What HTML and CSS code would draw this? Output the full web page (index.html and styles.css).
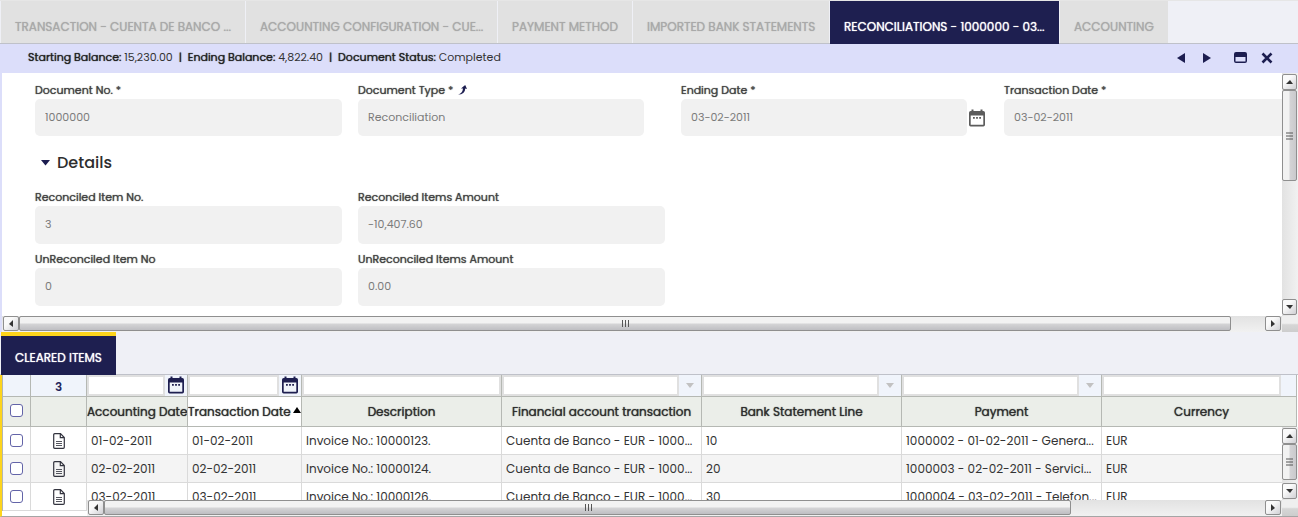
FILE: index.html
```html
<!DOCTYPE html>
<html lang="en">
<head>
<meta charset="utf-8">
<title>Reconciliations</title>
<link rel="stylesheet" href="styles.css">
</head>
<body>
<svg class="defs" aria-hidden="true">
  <symbol id="cal" viewBox="0 0 16 18"><path fill-rule="evenodd" d="M2.500 0.500h2v1.500h7V.5h2v1.500h.8q1.700 0 1.700 1.700v12q0 1.800-1.700 1.800H1.700Q0 17.500 0 15.700v-12Q0 2 1.700 2h.8zM1.700 6.500v9.300h12.600V6.500zM4 8h1.800v1.800H4zM7.100 8h1.800v1.800H7.100zM10.200 8h1.800v1.800h-1.800z"/></symbol>
  <symbol id="doc" viewBox="0 0 12 16"><path d="M.7 1.700q0-1 1-1H7.500l3.800 3.800v9.800q0 1-1 1H1.700q-1 0-1-1zM7.300 1v3.700h4" fill="none" stroke="#33343f" stroke-width="1.200"/><path d="M3 8.500h6M3 10.500h6M3 12.500h6" stroke="#55565f" stroke-width="1.200"/></symbol>
</svg>

<nav class="tabs">
  <button class="tab w-a">TRANSACTION - CUENTA DE BANCO ...</button>
  <button class="tab w-b">ACCOUNTING CONFIGURATION - CUE...</button>
  <button class="tab w-c">PAYMENT METHOD</button>
  <button class="tab w-d">IMPORTED BANK STATEMENTS</button>
  <button class="tab w-e active">RECONCILIATIONS - 1000000 - 03...</button>
  <button class="tab w-f">ACCOUNTING</button>
</nav>

<header class="status">
  <p class="facts"><b>Starting Balance:</b> 15,230.00 <b class="bar">|</b> <b>Ending Balance:</b> 4,822.40 <b class="bar">|</b> <b>Document Status:</b> Completed</p>
  <div class="tools">
    <button aria-label="Previous"><svg width="10" height="12"><path d="M9 1v10L1 6z"/></svg></button>
    <button aria-label="Next" class="near"><svg width="10" height="12"><path d="M1 1v10l8-5z"/></svg></button>
    <button aria-label="Restore" class="apart"><svg width="14" height="12"><path fill-rule="evenodd" d="M2 0h9q2 0 2 2v7q0 2-2 2H2q-2 0-2-2V2Q0 0 2 0zM1.500 5v4.500h10V5z"/></svg></button>
    <button aria-label="Close"><svg width="12" height="12"><path d="M1.500 1.500l9 9M10.500 1.500l-9 9" stroke="#1c1d50" stroke-width="2.600"/></svg></button>
  </div>
</header>

<main class="pane">
  <form class="form">
    <div class="fields">
      <div class="field"><label for="docno">Document No. *</label><input id="docno" value="1000000" readonly></div>
      <div class="field"><label for="doctype">Document Type * <svg class="link" width="10" height="10"><path d="M0 9.500Q4.500 8.500 5 3.500L3 3.500 7.200 0 9 4 7.300 3.500Q7 9.500 0 9.500z"/></svg></label><input id="doctype" class="short" value="Reconciliation" readonly></div>
      <div class="field"><label for="ending">Ending Date *</label><div class="dated"><input id="ending" class="short" value="03-02-2011" readonly><svg class="cal" width="16" height="18"><use href="#cal"/></svg></div></div>
      <div class="field"><label for="trx">Transaction Date *</label><input id="trx" value="03-02-2011" readonly></div>
    </div>
    <h2 class="section"><svg width="9" height="6"><path d="M0 0h9L4.500 5.500z"/></svg>Details</h2>
    <div class="fields tall">
      <div class="field"><label for="rno">Reconciled Item No.</label><input id="rno" value="3" readonly></div>
      <div class="field"><label for="ramt">Reconciled Items Amount</label><input id="ramt" value="-10,407.60" readonly></div>
      <div class="field"><label for="uno">UnReconciled Item No</label><input id="uno" value="0" readonly></div>
      <div class="field"><label for="uamt">UnReconciled Items Amount</label><input id="uamt" value="0.00" readonly></div>
    </div>
  </form>
  <div class="sb v form-v">
    <i class="btn"><svg width="7" height="4"><path d="M0 4h7L4 0z"/></svg></i><i class="thumb"><svg width="7" height="8"><path d="M0 1h7M0 4h7M0 7h7" stroke="#555"/></svg></i>
    <i class="btn end"><svg width="7" height="4"><path d="M0 0h7L4 4z"/></svg></i>
  </div>
  <div class="sb h form-h">
    <i class="btn"><svg width="4" height="7"><path d="M4 0v7L0 4z"/></svg></i><i class="thumb"><svg width="8" height="7"><path d="M1.500 0v7M4.500 0v7M7.500 0v7" stroke="#555"/></svg></i>
    <i class="btn end"><svg width="4" height="7"><path d="M0 0v7l4-3z"/></svg></i>
  </div>
  <div class="corner"></div>
</main>

<nav class="subtabs"><button class="subtab">CLEARED ITEMS</button></nav>

<section class="grid">
  <table>
    <colgroup><col class="c-check"><col class="c-num"><col class="c-acc"><col class="c-trx"><col class="c-text"><col class="c-text"><col class="c-text"><col class="c-text"><col></colgroup>
    <thead>
      <tr class="filters">
        <td></td><td class="count">3</td>
        <td><div class="filter"><input aria-label="Filter accounting date"><span class="pick date"><svg class="cal" width="16" height="18"><use href="#cal"/></svg></span></div></td>
        <td><div class="filter"><input aria-label="Filter transaction date"><span class="pick date"><svg class="cal" width="16" height="18"><use href="#cal"/></svg></span></div></td>
        <td><div class="filter"><input aria-label="Filter description"></div></td>
        <td><div class="filter"><input aria-label="Filter financial account transaction"><span class="pick"><svg width="8" height="5"><path d="M0 0h8L4 5z"/></svg></span></div></td>
        <td><div class="filter"><input aria-label="Filter bank statement line"><span class="pick"><svg width="8" height="5"><path d="M0 0h8L4 5z"/></svg></span></div></td>
        <td><div class="filter"><input aria-label="Filter payment"><span class="pick"><svg width="8" height="5"><path d="M0 0h8L4 5z"/></svg></span></div></td>
        <td><div class="filter last"><input aria-label="Filter currency"></div></td>
      </tr>
      <tr class="heads">
        <th class="all"><input type="checkbox" aria-label="Select all"></th><th></th>
        <th>Accounting Date</th>
        <th class="sorted">Transaction Date<svg class="sort" width="8" height="6"><path d="M0 6h8L4 0z"/></svg></th>
        <th>Description</th><th>Financial account transaction</th><th>Bank Statement Line</th><th>Payment</th><th class="wide">Currency</th>
      </tr>
    </thead>
    <tbody>
      <tr><td class="mid"><input type="checkbox" aria-label="Select row 1"></td><td class="mid"><svg width="12" height="16"><use href="#doc"/></svg></td><td>01-02-2011</td><td>01-02-2011</td><td>Invoice No.: 10000123.</td><td>Cuenta de Banco - EUR - 1000...</td><td>10</td><td>1000002 - 01-02-2011 - Genera...</td><td>EUR</td></tr>
      <tr><td class="mid"><input type="checkbox" aria-label="Select row 2"></td><td class="mid"><svg width="12" height="16"><use href="#doc"/></svg></td><td>02-02-2011</td><td>02-02-2011</td><td>Invoice No.: 10000124.</td><td>Cuenta de Banco - EUR - 1000...</td><td>20</td><td>1000003 - 02-02-2011 - Servici...</td><td>EUR</td></tr>
      <tr><td class="mid"><input type="checkbox" aria-label="Select row 3"></td><td class="mid"><svg width="12" height="16"><use href="#doc"/></svg></td><td>03-02-2011</td><td>03-02-2011</td><td>Invoice No.: 10000126.</td><td>Cuenta de Banco - EUR - 1000...</td><td>30</td><td>1000004 - 03-02-2011 - Telefon...</td><td>EUR</td></tr>
    </tbody>
  </table>
  <div class="sb v grid-v">
    <i class="btn"><svg width="7" height="4"><path d="M0 4h7L4 0z"/></svg></i><i class="thumb"><svg width="7" height="8"><path d="M0 1h7M0 4h7M0 7h7" stroke="#555"/></svg></i>
    <i class="btn end"><svg width="7" height="4"><path d="M0 0h7L4 4z"/></svg></i>
  </div>
  <div class="sb h grid-h">
    <i class="btn"><svg width="4" height="7"><path d="M4 0v7L0 4z"/></svg></i><i class="thumb"><svg width="8" height="7"><path d="M1.500 0v7M4.500 0v7M7.500 0v7" stroke="#555"/></svg></i>
    <i class="btn end"><svg width="4" height="7"><path d="M0 0v7l4-3z"/></svg></i>
  </div>
  <div class="corner grid-corner"></div>
</section>
</body>
</html>
```
FILE: styles.css
```css
* { box-sizing: border-box; }
body { margin: 0; background: #fff; color: #333; font: 11px/18px Poppins, Inter, "Open Sans", sans-serif; }
button, input { font: inherit; color: inherit; margin: 0; padding: 0; border: 0; background: none; border-radius: 0; }
svg { display: block; flex: none; }
.defs { position: absolute; width: 0; height: 0; }

.tabs { display: flex; gap: 1px; height: 44px; padding-left: 1px; background: #eff0f6; border-top: 1px solid #e6e6e6; border-bottom: 1px solid #bfc1c9; }
.tab { flex: 0 1 auto; padding: 9px 14px 0; text-align: left; white-space: nowrap; overflow: hidden; background: #e1e1e1; color: #a9a9a9; font-size: 12px; text-shadow: 0 0 1px currentColor; }
.tab.active { background: #1e1f50; color: #fff; height: 43px; }
.w-a { width: 244px; }
.w-b { width: 251px; }
.w-c { width: 134px; }
.w-d { width: 196px; }
.w-e { width: 229px; }
.w-f { width: 108px; }

.status { display: flex; align-items: center; justify-content: space-between; height: 29px; padding: 0 25px 0 28px; background: #dcdefa; }
.facts { margin: 0; padding-bottom: 4px; white-space: nowrap; }
.facts b { font-weight: 400; color: #222; text-shadow: 0 0 1px currentColor; }
.facts .bar { margin: 0 3px; }
.tools { display: flex; align-items: center; gap: 13px; padding-bottom: 2px; }
.tools svg, .section svg, .link { fill: #1c1d50; }
.tools .near { margin-left: 3px; }
.tools .apart { margin-left: 9px; }

.pane { display: grid; grid-template-columns: minmax(0, 1fr) 16px; grid-template-rows: auto 16px; border-left: 2px solid #dcdefa; }
.form { overflow: hidden; padding: 8px 0 10px 33px; }
.fields { display: grid; grid-template-columns: repeat(4, 307px); column-gap: 16px; }
.fields.tall { grid-template-columns: repeat(2, 307px); row-gap: 6px; }
.field label { display: flex; align-items: center; gap: 5px; color: #444; white-space: nowrap; text-shadow: 0 0 1px currentColor; }
.field input { display: block; width: 100%; height: 37px; padding: 0 10px; border-radius: 5px; background: #f1f1f1; color: #7b7b7b; }
.field .short { width: 286px; }
.tall .field input { height: 38px; padding-bottom: 1px; }
.dated { display: flex; align-items: center; gap: 2px; }
.dated .cal { fill: #5c5c5c; }
.section { display: flex; align-items: center; gap: 7px; height: 52px; margin: 0; padding: 2px 0 0 6px; font-size: 16px; font-weight: 500; color: #2e2e2e; }

.sb { position: relative; display: flex; }
.sb i { display: flex; align-items: center; justify-content: center; border: 1px solid #8f8f8f; border-radius: 2px; }
.sb svg { fill: #333; }
.sb.v { flex-direction: column; padding: 1px 1px 1px 0; width: 16px; background: linear-gradient(90deg, #e2e2e2, #f1f1f1); }
.sb.h { padding: 0 0 1px 1px; height: 16px; background: linear-gradient(#e2e2e2, #f1f1f1); }
.sb .btn { flex: 0 0 16px; background: linear-gradient(135deg, #fafafa 35%, #d0d0d4); }
.v .thumb { background: linear-gradient(90deg, #f2f2f2 45%, #d3d3d5 55%, #c9c9cc); }
.h .thumb { background: linear-gradient(#f2f2f2 45%, #d3d3d5 55%, #bebec2); }
.v .end { margin-top: auto; }
.h .end { margin-left: auto; margin-right: 1px; }
.form-v .thumb { height: 91px; }
.form-h .thumb { width: 94.8%; }
.corner { background: linear-gradient(#efefef 45%, #d6d6d6 55%, #cdcdcd); }

.subtabs { display: flex; height: 43px; padding-left: 1px; background: #eff0f6; border-bottom: 1px solid #bfc1c9; }
.subtab { height: 43px; width: 115px; border-top: 4px solid #fdd41c; background: #1e1f50; color: #fff; font-size: 12px; padding: 5px 0 0; white-space: nowrap; text-shadow: 0 0 1px currentColor; }

.grid { position: relative; border-left: 2px solid #fdd41c; padding: 0 1px 5px 0; border-bottom: 1px solid #a5a5a5; font-size: 12px; }
.grid table { width: 100%; table-layout: fixed; border-collapse: separate; border-spacing: 0; border-left: 1px solid #b3b6b3; }
.c-check { width: 28px; }
.c-num { width: 56px; }
.c-acc { width: 101px; }
.c-trx { width: 114px; }
.c-text { width: 200px; }
.grid td, .grid th { padding: 0; border-right: 1px solid #b5b8b3; border-bottom: 1px solid #b5b8b3; white-space: nowrap; overflow: hidden; }
.filters td { height: 22px; background: #f0f4fb; }
.filters .count { padding-top: 2px; text-align: center; font-weight: 600; color: #23245a; }
.filter { display: flex; height: 21px; }
.filter.last { padding-right: 15px; }
.filter input { flex: 1; min-width: 0; height: 21px; background: #fff; border: 2px solid #e0e0e0; }
.pick { display: flex; flex: 0 0 22px; align-items: center; justify-content: center; fill: #c2c2c2; }
.date { padding-bottom: 1px; }
.date .cal { fill: #1e1f50; }
.heads th { height: 30px; background: #ebeee9; font-weight: 400; color: #2e2e2e; text-shadow: 0 0 1px currentColor; }
.heads .sorted { position: relative; background: #fff; text-align: left; }
.heads .all { padding-bottom: 3px; }
.heads .wide { padding-left: 5px; }
.sort { position: absolute; right: 0; top: 10px; fill: #000; }
.grid tbody td { height: 28px; padding: 0 4px; border-color: #dadada; }
.grid tbody .mid { padding: 0; }
.grid tbody tr:nth-child(2) td { background: #f4f4f4; }
.mid svg { margin: 1px auto 0; }
.grid input[type="checkbox"] { appearance: none; display: block; width: 13px; height: 13px; margin: 0 auto; border: 1px solid #6364a8; border-radius: 3px; background: #fff; }

.grid .grid-v { position: absolute; right: 0; top: 52px; bottom: 16px; }
.grid-v .thumb { height: 36px; }
.grid .grid-h { position: absolute; left: 85px; right: 16px; bottom: 0; }
.grid-h .thumb { width: 81%; }
.grid-corner { position: absolute; right: 0; bottom: 0; width: 16px; height: 16px; }
```
